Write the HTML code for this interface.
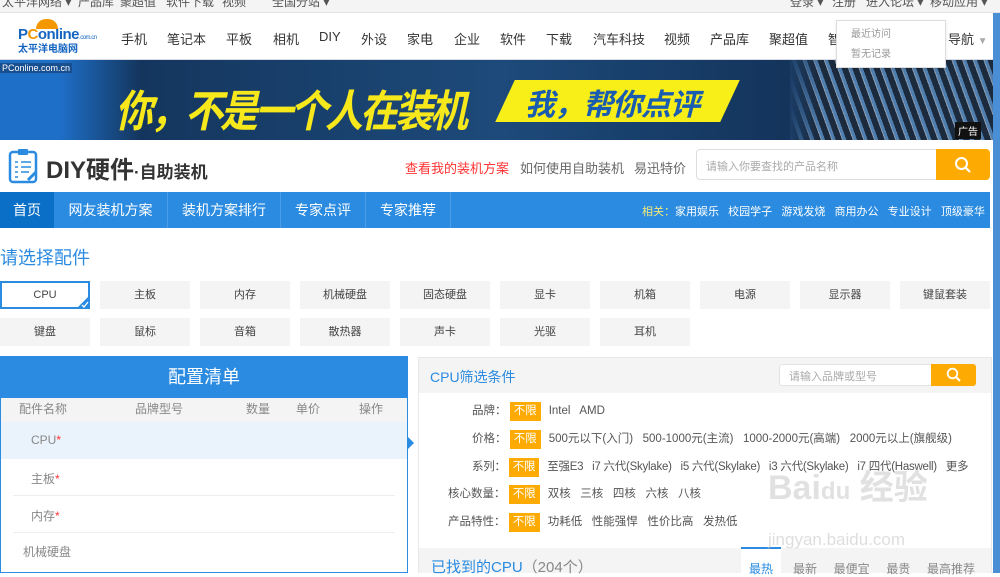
<!DOCTYPE html>
<html><head><meta charset="utf-8"><style>
*{margin:0;padding:0;box-sizing:border-box}
body{width:1000px;height:573px;overflow:hidden;position:relative;background:#fff;font-family:"Liberation Sans","Noto Sans CJK SC",sans-serif;font-size:12px;color:#333}
.a{position:absolute;white-space:nowrap}
.top{left:0;top:0;width:1000px;height:13px;background:#f4f4f4;border-bottom:1px solid #e2e2e2;overflow:hidden}
.top span{position:absolute;top:-7px;font-size:12px;color:#555}
.nav span{position:absolute;top:29px;font-size:13px;color:#333}
.banner{left:0;top:60px;width:993px;height:80px;background:linear-gradient(90deg,#1e6fc8 0,#1e6fc8 60px,#14365e 140px,#1d4a7a 500px,#13335a 800px,#1a3c66 993px);overflow:hidden}
.part{position:absolute;width:90px;height:28px;background:#f4f4f4;text-align:center;line-height:28px;font-size:11px;color:#444}
.tag{display:inline-block;background:#fdab02;color:#fff;padding:0 4px;height:19px;line-height:19px;margin-right:8px}
.f{font-size:11.5px;color:#555}
</style></head><body>
<div class="a top"><span style="left:2px">太平洋网络 ▾</span><span style="left:78px">产品库</span><span style="left:120px">聚超值</span><span style="left:166px">软件下载</span><span style="left:222px">视频</span><span style="left:272px">全国分站 ▾</span><span style="left:790px">登录 ▾</span><span style="left:832px">注册</span><span style="left:866px">进入论坛 ▾</span><span style="left:930px">移动应用 ▾</span></div>
<div class="a" style="left:0;top:59px;width:993px;height:1px;background:#d8dde5"></div>
<div class="a" style="left:18px;top:26px;font-size:15px;font-weight:bold;color:#1565c0;letter-spacing:-0.5px">P<span style="color:#f39800">C</span>online<span style="font-size:6px;font-weight:normal">.com.cn</span></div>
<div class="a" style="left:18px;top:40px;font-size:10px;color:#1565c0;font-weight:bold">太平洋电脑网</div>
<div class="a" style="left:36px;top:19px;width:22px;height:10px;border-radius:11px 11px 0 0;background:#f39800"></div>
<div class="a nav" style="left:0;top:0;width:1000px;height:60px">
<span style="left:121px">手机</span><span style="left:167px">笔记本</span><span style="left:226px">平板</span><span style="left:273px">相机</span><span style="left:319px">DIY</span><span style="left:361px">外设</span><span style="left:407px">家电</span><span style="left:454px">企业</span><span style="left:500px">软件</span><span style="left:546px">下载</span><span style="left:593px">汽车科技</span><span style="left:664px">视频</span><span style="left:710px">产品库</span><span style="left:769px">聚超值</span><span style="left:828px">智</span><span style="left:948px">导航 <span style="position:static;color:#aaa;font-size:10px">▼</span></span></div>
<div class="a banner">
<div class="a" style="left:0;top:3px;background:#1a4f8f;color:#fff;font-size:9px;padding:0 2px">PConline.com.cn</div>
<div class="a" style="left:115px;top:16px;font-size:38px;font-weight:bold;color:#f7e81c;letter-spacing:-3px;font-style:italic;transform:scaleY(1.15);transform-origin:top left">你，不是一个人在装机</div>
<div class="a" style="left:505px;top:20px;width:225px;height:42px;background:#f9ef18;transform:skewX(-25deg)"></div>
<div class="a" style="left:525px;top:20px;font-size:30px;font-weight:bold;color:#1a5cb0;font-style:italic;letter-spacing:-1px">我，帮你点评</div>
<div class="a" style="left:790px;top:0;width:203px;height:80px;background:linear-gradient(90deg,#1a3c66,rgba(30,60,100,0) 30px),repeating-linear-gradient(70deg,#4f7fb0 0 3px,#1b2a3c 3px 9px,#8a9bb0 9px 10px)"></div>
<div class="a" style="left:955px;top:62px;background:#111;color:#fff;font-size:10px;padding:1px 3px">广告</div>
</div>
<div class="a" style="left:836px;top:20px;width:110px;height:48px;background:#fff;border:1px solid #ddd;box-shadow:0 1px 3px rgba(0,0,0,.1)"><div style="padding:4px 14px;font-size:10px;color:#999;line-height:20px">最近访问<br>暂无记录</div></div>
<div class="a" style="left:993px;top:13px;width:7px;height:560px;background:#4a8fd6"></div>
<svg class="a" style="left:8px;top:148px" width="32" height="36" viewBox="0 0 32 36"><rect x="2" y="4" width="26" height="30" rx="3" fill="none" stroke="#2a8be0" stroke-width="2.5"/><rect x="10" y="1" width="10" height="6" rx="1" fill="#2a8be0"/><g stroke="#2a8be0" stroke-width="1.6"><path d="M7 14h3M13 14h10M7 19h3M13 19h10M7 24h3M13 24h8M7 29h3"/></g><path d="M20 32l8-8" stroke="#2a8be0" stroke-width="3"/></svg>
<div class="a" style="left:46px;top:150px;font-size:24px;font-weight:bold;color:#333">DIY硬件<span style="font-size:17px;font-weight:bold">·自助装机</span></div>
<div class="a" style="left:405px;top:158px;font-size:13px;color:#f33">查看我的装机方案</div>
<div class="a" style="left:520px;top:158px;font-size:13px;color:#666">如何使用自助装机</div>
<div class="a" style="left:634px;top:158px;font-size:13px;color:#666">易迅特价</div>
<div class="a" style="left:696px;top:149px;width:241px;height:31px;border:1px solid #ddd;border-radius:4px 0 0 4px;font-size:11px;color:#aaa;padding:8px 9px">请输入你要查找的产品名称</div>
<div class="a" style="left:936px;top:149px;width:54px;height:31px;background:#fdab02;border-radius:0 4px 4px 0"><svg style="margin:7px 0 0 18px" width="18" height="18"><circle cx="7.5" cy="7.5" r="5.5" fill="none" stroke="#fff" stroke-width="2"/><path d="M11.5 11.5l4.5 4.5" stroke="#fff" stroke-width="2.2"/></svg></div>
<div class="a" style="left:0;top:192px;width:990px;height:36px;background:#2a8be0"></div>
<div class="a" style="left:0;top:192px;width:54px;height:36px;background:#0a6fc6;color:#fff;font-size:14px;line-height:36px;text-align:center">首页</div>
<div class="a" style="top:192px;left:54px;height:36px;line-height:36px;color:#fff;font-size:14px">
<span style="display:inline-block;width:114px;text-align:center;border-right:1px solid #4a9de6">网友装机方案</span><span style="display:inline-block;width:113px;text-align:center;border-right:1px solid #4a9de6">装机方案排行</span><span style="display:inline-block;width:85px;text-align:center;border-right:1px solid #4a9de6">专家点评</span><span style="display:inline-block;width:85px;text-align:center;border-right:1px solid #4a9de6">专家推荐</span></div>
<div class="a" style="left:642px;top:203px;font-size:11px;color:#fff"><span style="color:#f5e97a">相关：</span>家用娱乐&nbsp;&nbsp; 校园学子&nbsp;&nbsp; 游戏发烧&nbsp;&nbsp; 商用办公&nbsp;&nbsp; 专业设计&nbsp;&nbsp; 顶级豪华</div>
<div class="a" style="left:0;top:244px;font-size:18px;color:#2a8be0">请选择配件</div>
<div class="part" style="left:0;top:281px;background:#fff;border:2px solid #2a8be0;line-height:24px">CPU<svg style="position:absolute;right:-2px;bottom:-2px" width="14" height="14"><path d="M14 0V14H0Z" fill="#2a8be0"/><path d="M6 10l2 2 4-5" stroke="#fff" fill="none" stroke-width="1.3"/></svg></div>
<div class="part" style="left:100px;top:281px">主板</div><div class="part" style="left:200px;top:281px">内存</div><div class="part" style="left:300px;top:281px">机械硬盘</div><div class="part" style="left:400px;top:281px">固态硬盘</div><div class="part" style="left:500px;top:281px">显卡</div><div class="part" style="left:600px;top:281px">机箱</div><div class="part" style="left:700px;top:281px">电源</div><div class="part" style="left:800px;top:281px">显示器</div><div class="part" style="left:900px;top:281px">键鼠套装</div>
<div class="part" style="left:0;top:318px">键盘</div><div class="part" style="left:100px;top:318px">鼠标</div><div class="part" style="left:200px;top:318px">音箱</div><div class="part" style="left:300px;top:318px">散热器</div><div class="part" style="left:400px;top:318px">声卡</div><div class="part" style="left:500px;top:318px">光驱</div><div class="part" style="left:600px;top:318px">耳机</div>
<div class="a" style="left:0;top:356px;width:408px;height:217px;border:1px solid #2a8be0;border-top:none"></div>
<div class="a" style="left:0;top:356px;width:408px;height:42px;background:#2a8be0;color:#fff;font-size:18px;text-align:center;line-height:42px">配置清单</div>
<div class="a" style="left:1px;top:398px;width:406px;height:24px;background:#f4f4f4;color:#888;font-size:12px;line-height:22px"><span class="a" style="left:18px">配件名称</span><span class="a" style="left:134px">品牌型号</span><span class="a" style="left:245px">数量</span><span class="a" style="left:295px">单价</span><span class="a" style="left:358px">操作</span></div>
<div class="a" style="left:1px;top:422px;width:406px;height:37px;background:#eaf3fc"></div>
<div class="a" style="left:31px;top:433px;color:#888">CPU<span style="color:#f33">*</span></div>
<div class="a" style="left:31px;top:470px;color:#888">主板<span style="color:#f33">*</span></div>
<div class="a" style="left:31px;top:507px;color:#888">内存<span style="color:#f33">*</span></div>
<div class="a" style="left:23px;top:543px;color:#888">机械硬盘</div>
<div class="a" style="left:13px;top:495px;width:382px;height:1px;background:#eee"></div>
<div class="a" style="left:13px;top:532px;width:382px;height:1px;background:#eee"></div>
<div class="a" style="left:408px;top:437px;border-left:6px solid #2a8be0;border-top:6px solid transparent;border-bottom:6px solid transparent"></div>
<div class="a" style="left:418px;top:357px;width:574px;height:216px;border:1px solid #e8e8e8"></div>
<div class="a" style="left:419px;top:358px;width:572px;height:35px;background:#f4f4f4"></div>
<div class="a" style="left:430px;top:367px;font-size:14px;color:#2a8be0">CPU筛选条件</div>
<div class="a" style="left:779px;top:364px;width:153px;height:22px;background:#fff;border:1px solid #e3e3e3;border-radius:3px 0 0 3px;font-size:11px;color:#aaa;padding:3px 9px">请输入品牌或型号</div>
<div class="a" style="left:931px;top:364px;width:45px;height:22px;background:#fdab02;border-radius:0 3px 3px 0"><svg style="margin:3px 0 0 15px" width="16" height="16"><circle cx="6.5" cy="6.5" r="4.8" fill="none" stroke="#fff" stroke-width="1.8"/><path d="M10 10l4 4" stroke="#fff" stroke-width="2"/></svg></div>
<div class="a f" style="left:472px;top:402px">品牌：&nbsp;<span class="tag">不限</span>Intel &nbsp; AMD</div>
<div class="a f" style="left:472px;top:430px">价格：&nbsp;<span class="tag">不限</span>500元以下(入门) &nbsp; 500-1000元(主流) &nbsp; 1000-2000元(高端) &nbsp; 2000元以上(旗舰级)</div>
<div class="a f" style="left:472px;top:458px;letter-spacing:-0.25px">系列：&nbsp;<span class="tag">不限</span>至强E3 &nbsp; i7 六代(Skylake) &nbsp; i5 六代(Skylake) &nbsp; i3 六代(Skylake) &nbsp; i7 四代(Haswell) &nbsp; 更多</div>
<div class="a f" style="left:448px;top:485px">核心数量：&nbsp;<span class="tag">不限</span>双核 &nbsp; 三核 &nbsp; 四核 &nbsp; 六核 &nbsp; 八核</div>
<div class="a f" style="left:448px;top:513px">产品特性：&nbsp;<span class="tag">不限</span>功耗低 &nbsp; 性能强悍 &nbsp; 性价比高 &nbsp; 发热低</div>
<div class="a" style="left:419px;top:548px;width:572px;height:25px;background:#f4f4f4"></div>
<div class="a" style="left:741px;top:547px;width:40px;height:26px;background:#fff;border-top:2px solid #2a8be0"></div>
<div class="a" style="left:431px;top:556px;font-size:15px;color:#2a8be0">已找到的CPU<span style="color:#888">（204个）</span></div>
<div class="a" style="left:749px;top:560px;font-size:12px;color:#2a8be0">最热</div>
<div class="a" style="left:793px;top:560px;font-size:12px;color:#888">最新 &nbsp; &nbsp; 最便宜 &nbsp; &nbsp; 最贵 &nbsp; &nbsp; 最高推荐</div>
<div class="a" style="left:768px;top:460px;font-size:34px;color:rgba(200,200,200,.55);font-weight:bold">Bai<span style="font-size:24px">du</span> 经验</div>
<div class="a" style="left:768px;top:530px;font-size:17px;color:rgba(200,200,200,.6)">jingyan.baidu.com</div>
</body></html>
